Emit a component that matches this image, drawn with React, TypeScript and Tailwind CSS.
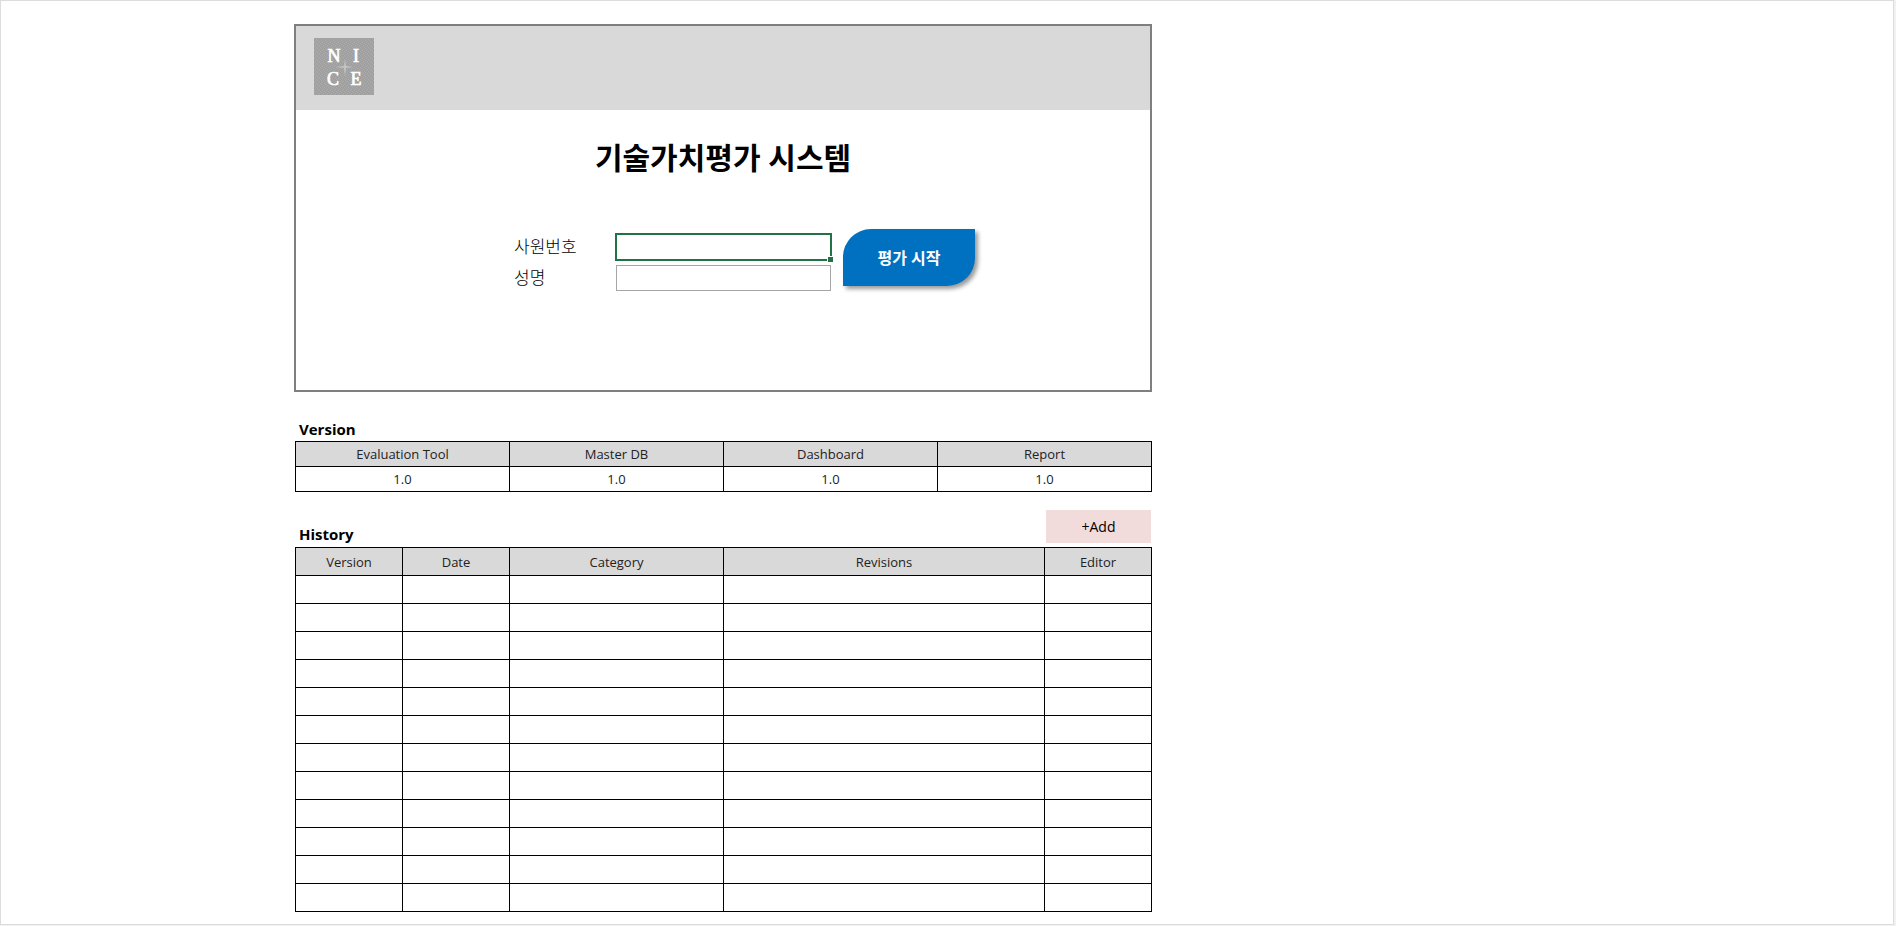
import { useState } from "react";

const versions = [
  { name: "Evaluation Tool", value: "1.0" },
  { name: "Master DB", value: "1.0" },
  { name: "Dashboard", value: "1.0" },
  { name: "Report", value: "1.0" },
];

const historyColumns = [
  { name: "Version", width: "w-1/8" },
  { name: "Date", width: "w-1/8" },
  { name: "Category", width: "w-2/8" },
  { name: "Revisions", width: "w-3/8" },
  { name: "Editor", width: "w-1/8" },
];

function Logo() {
  return (
    <svg
      role="img"
      aria-label="NICE"
      viewBox="0 0 60 57"
      className="h-[57px] w-[60px]"
      fontFamily="'Liberation Serif', serif"
      fontSize="18"
      textAnchor="middle"
      fill="#fff"
    >
      <defs>
        <pattern id="grain" width="4" height="4" patternUnits="userSpaceOnUse">
          <rect width="4" height="4" fill="#a0a0a0" />
          <path d="M0 0h1v1H0zM2 1h1v1H2zM1 3h1v1H1zM3 2h1v1H3z" fill="#acacac" />
        </pattern>
      </defs>
      <rect width="60" height="57" fill="url(#grain)" />
      <path d="M31 21l1 7 7 1-7 1-1 8-1-8-8-1 8-1z" fill="#c4c4c4" />
      <g stroke="#fff" strokeWidth="0.7">
        <text x="20" y="24">N</text>
        <text x="42" y="24">I</text>
        <text x="19" y="47">C</text>
        <text x="42" y="47">E</text>
      </g>
    </svg>
  );
}

function LoginPanel() {
  const [employeeId, setEmployeeId] = useState("");
  const [name, setName] = useState("");
  return (
    <section className="border-2 border-[#7f7f7f] pb-[99px]">
      <header className="bg-[#d9d9d9] px-[18px] pt-3 pb-[15px]">
        <Logo />
      </header>
      <h1 className="mt-6 text-center text-[30px] leading-[48px] font-bold text-black">
        기술가치평가 시스템
      </h1>
      <form
        className="mt-[47px] flex items-start gap-3 pl-[218px]"
        onSubmit={(e) => e.preventDefault()}
      >
        <div className="grid grid-cols-[102px_215px] items-center gap-y-[5px] pt-[5px]">
          <label htmlFor="employee-id" className="text-[17px] leading-[26px] font-light">
            사원번호
          </label>
          <div className="relative">
            <input
              id="employee-id"
              value={employeeId}
              onChange={(e) => setEmployeeId(e.target.value)}
              className="block h-[26px] w-full border border-[#217346] bg-white px-2 text-sm ring-1 ring-[#217346] outline-none"
            />
            <span className="absolute -right-0.5 -bottom-0.5 size-[6px] border-t border-l border-white bg-[#217346]" />
          </div>
          <label htmlFor="name" className="text-[17px] leading-[26px] font-light">
            성명
          </label>
          <input
            id="name"
            value={name}
            onChange={(e) => setName(e.target.value)}
            className="block h-[26px] w-full border border-[#a6a6a6] bg-white px-2 text-sm outline-none"
          />
        </div>
        <button
          type="submit"
          className="h-[57px] w-[132px] rounded-tl-[28px] rounded-br-[28px] bg-[#0070c0] text-base font-bold text-white shadow-[3px_3px_4px_rgba(0,0,0,0.4)]"
        >
          평가 시작
        </button>
      </form>
    </section>
  );
}

export default function App() {
  return (
    <div className="flex min-h-screen bg-[#f1f1f1] pr-0.5 pb-px font-['Open_Sans','Noto_Sans_CJK_KR',sans-serif] text-black">
      <main className="w-full border border-[#dcdcdc] bg-white pt-[23px] pb-3 pl-[293px]">
        <div className="w-full max-w-[858px]">
          <LoginPanel />

          <div className="pl-px">
            <h2 className="mt-[25px] pl-1 text-[15px] leading-6 font-bold">Version</h2>
            <table className="w-full table-fixed border-collapse text-center text-[13px] leading-6">
              <thead>
                <tr>
                  {versions.map((v) => (
                    <th key={v.name} className="h-[25px] border border-black bg-[#d9d9d9] p-0 font-normal text-[#222]">
                      {v.name}
                    </th>
                  ))}
                </tr>
              </thead>
              <tbody>
                <tr>
                  {versions.map((v) => (
                    <td key={v.name} className="h-[25px] border border-black p-0 text-[#222]">
                      {v.value}
                    </td>
                  ))}
                </tr>
              </tbody>
            </table>

            <div className="mt-[18px] flex items-start justify-between pr-px pb-px">
              <h2 className="mt-3 pl-1 text-[15px] leading-6 font-bold">History</h2>
              <button type="button" className="h-[33px] w-[105px] bg-[#f2dcdb] text-sm">
                +Add
              </button>
            </div>
            <table className="w-full table-fixed border-collapse text-center text-[13px] leading-6">
              <thead>
                <tr>
                  {historyColumns.map((c) => (
                    <th
                      key={c.name}
                      className={`${c.width} h-7 border border-black bg-[#d9d9d9] p-0 font-normal text-[#222]`}
                    >
                      {c.name}
                    </th>
                  ))}
                </tr>
              </thead>
              <tbody>
                {Array.from({ length: 12 }, (_, row) => (
                  <tr key={row}>
                    {historyColumns.map((c) => (
                      <td key={c.name} className="h-7 border border-black p-0" />
                    ))}
                  </tr>
                ))}
              </tbody>
            </table>
          </div>
        </div>
      </main>
    </div>
  );
}
